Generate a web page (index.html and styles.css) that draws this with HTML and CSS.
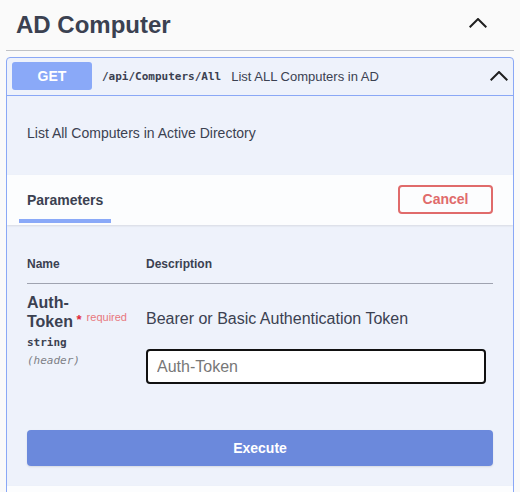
FILE: index.html
```html
<!DOCTYPE html>
<html lang="en">
<head>
<meta charset="utf-8">
<title>AD Computer</title>
<link rel="stylesheet" href="styles.css">
</head>
<body>
<div class="wrap">
  <div class="tag">
    <h3 class="tag-title">AD Computer</h3>
    <svg class="chev chev-tag" width="18" height="10" viewBox="0 0 18 10"><path d="M0.7 9.3 L9 1 L17.3 9.3"/></svg>
  </div>
  <div class="opblock">
    <div class="summary">
      <span class="method">GET</span>
      <span class="path">/api/Computers/All</span>
      <span class="summary-desc">List ALL Computers in AD</span>
      <svg class="chev chev-op" width="18" height="10" viewBox="0 0 18 10"><path d="M0.7 9.3 L9 1 L17.3 9.3"/></svg>
    </div>
    <div class="op-desc">List All Computers in Active Directory</div>
    <div class="sec-header">
      <div class="tab">Parameters</div>
      <button class="cancel">Cancel</button>
    </div>
    <div class="table-container">
      <table class="params">
        <thead>
          <tr><th class="col-name">Name</th><th>Description</th></tr>
        </thead>
        <tbody>
          <tr>
            <td class="col-name">
              <div class="pname">Auth-Token<span class="star">&nbsp;*</span><span class="req">required</span></div>
              <div class="ptype">string</div>
              <div class="pin">(header)</div>
            </td>
            <td class="col-desc">
              <p class="pdesc">Bearer or Basic Authentication Token</p>
              <input class="param-input" type="text" placeholder="Auth-Token">
            </td>
          </tr>
        </tbody>
      </table>
    </div>
    <div class="execute-wrapper">
      <button class="execute">Execute</button>
    </div>
    <div class="responses"></div>
  </div>
</div>
</body>
</html>
```

FILE: styles.css
```css
* { box-sizing: border-box; }

body {
  margin: 0;
  background: #fafafa;
  font-family: "Liberation Sans", Arial, sans-serif;
  color: #3b4151;
}

.wrap { padding: 0 6px; }

.tag {
  display: flex;
  height: 51px;
  padding: 0 27px 0 10px;
  border-bottom: 1px solid rgba(59, 65, 81, 0.3);
}

.tag-title {
  flex: 1;
  margin: 0;
  font-size: 24px;
  font-weight: 700;
  line-height: 50px;
}

.chev {
  flex: none;
  fill: none;
  stroke: #1f1f1f;
  stroke-width: 2;
}

.chev-tag { margin-top: 18px; }

.opblock {
  margin-top: 6px;
  border: 1px solid #8aa8f6;
  border-radius: 4px;
  background: #eef2fb;
  overflow: hidden;
}

.summary {
  display: flex;
  align-items: center;
  padding: 4px 5px 5px 5px;
  border-bottom: 1px solid #8aa8f6;
}

.method {
  width: 80px;
  height: 28px;
  display: flex;
  align-items: center;
  justify-content: center;
  background: #8aa9f8;
  border-radius: 3px;
  color: #fff;
  font-size: 14px;
  font-weight: 700;
}

.path {
  margin-left: 10px;
  font-family: "DejaVu Sans Mono", monospace;
  font-size: 11px;
  font-weight: 700;
}

.summary-desc {
  flex: 1;
  margin-left: 10px;
  font-size: 13px;
}

.op-desc {
  padding: 27px 20px 32px;
  font-size: 14px;
  line-height: 20px;
}

.sec-header {
  display: flex;
  align-items: center;
  justify-content: space-between;
  height: 50px;
  padding: 0 20px 2px 12px;
  background: rgba(255, 255, 255, 0.8);
  box-shadow: 0 1px 2px rgba(0, 0, 0, 0.1);
}

.tab {
  align-self: flex-end;
  padding: 16px 8px 10px;
  border-bottom: 4px solid #8aa9f8;
  font-size: 14px;
  font-weight: 700;
  line-height: 18px;
}

.cancel {
  width: 95px;
  height: 29px;
  padding: 0;
  border: 2px solid #e06b6b;
  border-radius: 4px;
  background: transparent;
  color: #e06b6b;
  font-family: inherit;
  font-size: 14px;
  font-weight: 700;
}

.table-container { padding: 20px 20px 16px; }

.params {
  width: 100%;
  border-collapse: collapse;
}

.params th {
  padding: 12px 0;
  text-align: left;
  font-size: 12px;
  font-weight: 700;
  line-height: 14px;
  border-bottom: 1px solid rgba(59, 65, 81, 0.25);
}

.col-name { width: 119px; }

.params td {
  padding: 10px 0;
  vertical-align: top;
}

.pname {
  font-size: 16px;
  font-weight: 700;
  line-height: 18.5px;
}

.star {
  font-size: 13px;
  line-height: 0;
  vertical-align: 3px;
  color: #e0283a;
}

.req {
  padding-left: 5px;
  font-size: 11px;
  font-weight: 400;
  line-height: 0;
  vertical-align: 6px;
  color: #e8787d;
}

.ptype {
  padding: 5px 0 4px;
  font-family: "DejaVu Sans Mono", monospace;
  font-size: 11px;
  font-weight: 700;
  line-height: 14px;
}

.pin {
  font-family: "DejaVu Sans Mono", monospace;
  font-size: 11px;
  font-style: italic;
  line-height: 14px;
  color: #7d7f86;
}

.pdesc {
  margin: 16px 0 0;
  font-size: 16px;
  line-height: 18px;
}

.param-input {
  display: block;
  width: 340px;
  height: 35px;
  margin-top: 21px;
  padding: 0 9px;
  border: 2px solid #111;
  border-radius: 4px;
  background: #fff;
  font-family: inherit;
  font-size: 16px;
  color: #3b4151;
}

.param-input::placeholder { color: #777; }

.execute-wrapper { padding: 20px; }

.execute {
  display: block;
  width: 100%;
  height: 36px;
  border: none;
  border-radius: 4px;
  background: #6b89dc;
  box-shadow: 0 1px 2px rgba(0, 0, 0, 0.1);
  color: #fff;
  font-family: inherit;
  font-size: 14px;
  font-weight: 700;
}

.responses {
  height: 40px;
  background: rgba(255, 255, 255, 0.8);
  box-shadow: 0 1px 2px rgba(0, 0, 0, 0.1);
}
```
